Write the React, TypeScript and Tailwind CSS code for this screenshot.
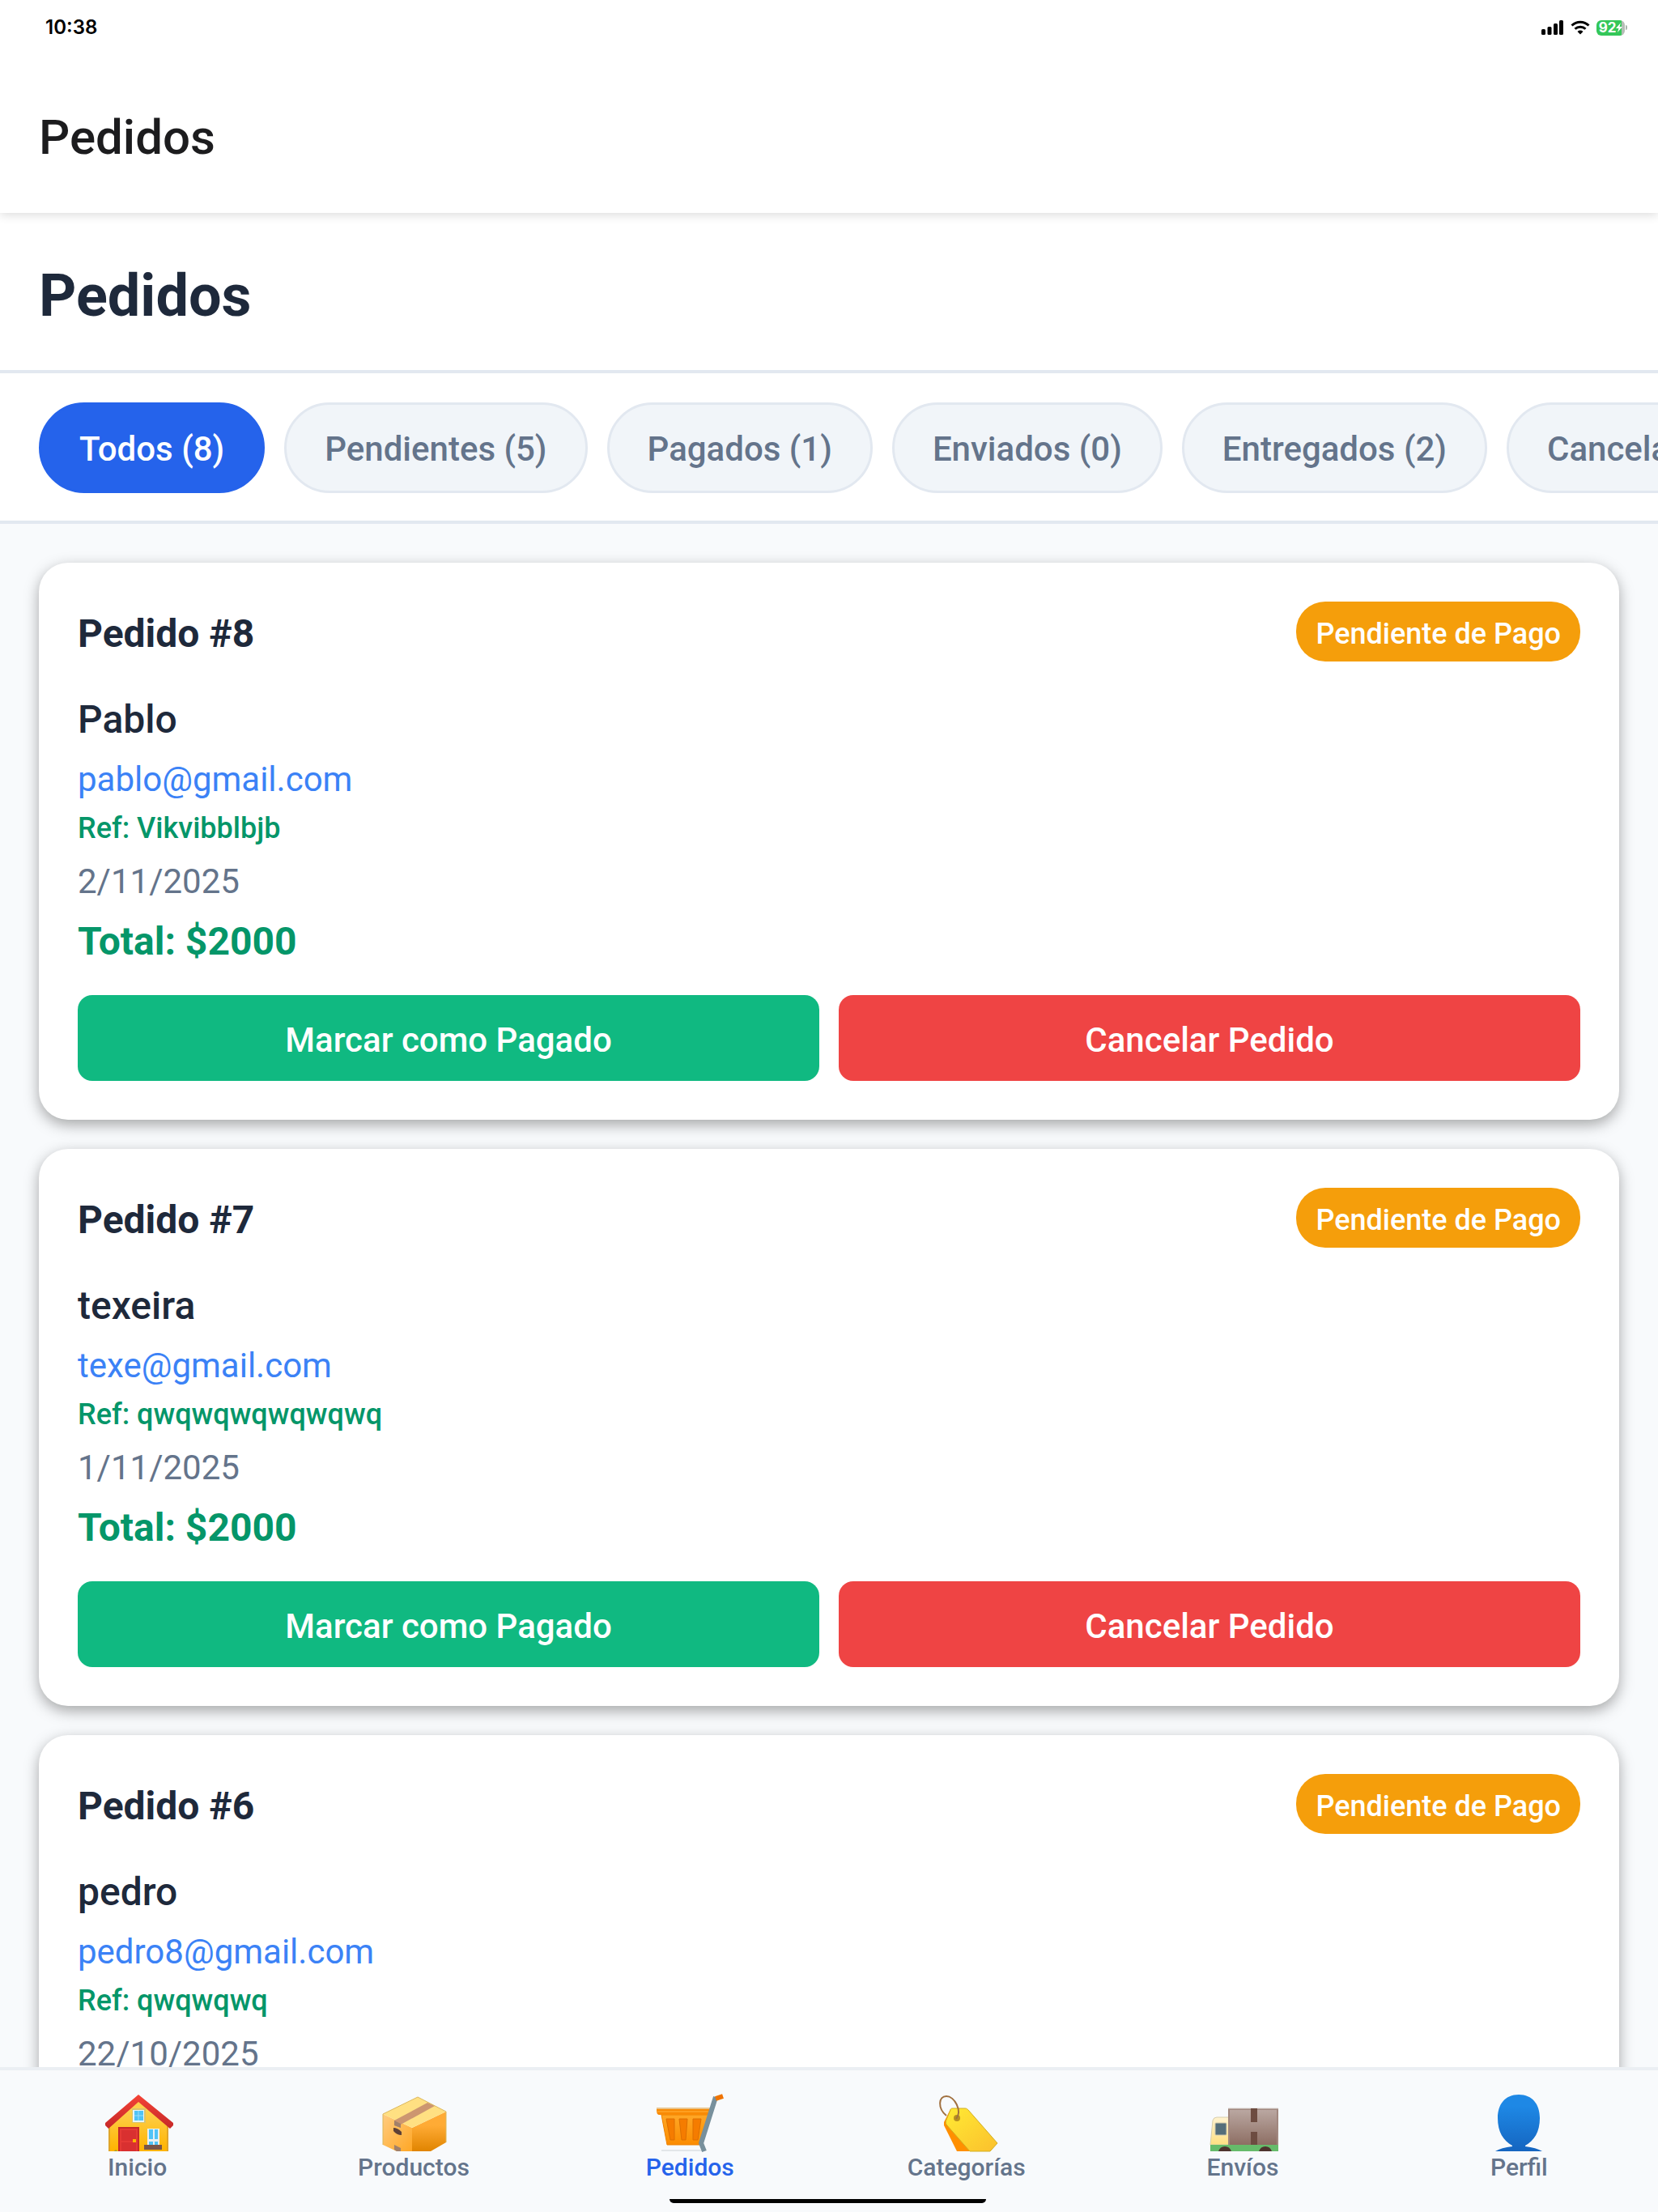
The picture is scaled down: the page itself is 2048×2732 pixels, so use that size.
import { useState } from 'react';
import type { ReactNode } from 'react';

interface Order {
  id: number;
  name: string;
  email: string;
  reference: string;
  date: string;
  total: number;
  status: string;
}

const orders: Order[] = [
  { id: 8, name: 'Pablo', email: 'pablo@gmail.com', reference: 'Vikvibblbjb', date: '2/11/2025', total: 2000, status: 'Pendiente de Pago' },
  { id: 7, name: 'texeira', email: 'texe@gmail.com', reference: 'qwqwqwqwqwqwq', date: '1/11/2025', total: 2000, status: 'Pendiente de Pago' },
  { id: 6, name: 'pedro', email: 'pedro8@gmail.com', reference: 'qwqwqwq', date: '22/10/2025', total: 2000, status: 'Pendiente de Pago' },
];

const filters = [
  { label: 'Todos', count: 8 },
  { label: 'Pendientes', count: 5 },
  { label: 'Pagados', count: 1 },
  { label: 'Enviados', count: 0 },
  { label: 'Entregados', count: 2 },
  { label: 'Cancelados', count: 0 },
];

function TabIcon({ children }: { children: ReactNode }) {
  return (
    <svg viewBox="0 0 84 70" className="h-[70px] w-[84px] overflow-visible" aria-hidden="true">
      {children}
    </svg>
  );
}

function HouseIcon() {
  return (
    <TabIcon>
      <defs>
        <linearGradient id="house-wall" x1="0" y1="0" x2="0" y2="1">
          <stop offset="0.2" stopColor="#fdd04c" />
          <stop offset="1" stopColor="#ffb300" />
        </linearGradient>
        <linearGradient id="house-roof" x1="0" y1="0" x2="0" y2="1">
          <stop offset="0" stopColor="#f44336" />
          <stop offset="1" stopColor="#c62828" />
        </linearGradient>
      </defs>
      <path d="M7 38 43 7l37 31v32H7z" fill="url(#house-wall)" />
      <path d="M7 38v32M79 38v32" stroke="#e0a52a" strokeWidth="2" />
      <path d="M43 0 86 35v3l-4 4L43 9 6 42l-4-4v-3z" fill="url(#house-roof)" />
      <path d="M18 40h26v30H18z" fill="#c62828" />
      <path d="M20 42h22v28H20z" fill="#e53935" />
      <path d="M22 44h18v13H22zM22 59h18v11H22z" fill="#d93030" />
      <rect x="36" y="55" width="4" height="4" fill="#ffb300" />
      <path d="M35 17h17v18H35z" fill="#d9c36b" />
      <path d="M36 19h14v15H36z" fill="#e8f4f8" />
      <path d="M38 20h11v12H38z" fill="#4fc3f7" />
      <path d="M43 20v12M38 26h11" stroke="#9adcf8" strokeWidth="1" />
      <path d="M54 42h15v21H54z" fill="#e8f0f2" />
      <path d="M56 43h5v12h-5zM63 43h4v12h-4zM56 58h5v4h-5zM63 58h4v4h-4z" fill="#4fc3f7" />
      <path d="M50 62h22v6H50z" fill="#795548" />
      <path d="M13 70c1-2 3-2 4 0z" fill="#9e9d24" />
    </TabIcon>
  );
}

function BoxIcon() {
  return (
    <TabIcon>
      <defs>
        <linearGradient id="box-left" x1="0" y1="0" x2="1" y2="1">
          <stop offset="0" stopColor="#ffcc80" />
          <stop offset="1" stopColor="#ffa726" />
        </linearGradient>
        <linearGradient id="box-right" x1="0" y1="0" x2="0" y2="1">
          <stop offset="0.35" stopColor="#ffab35" />
          <stop offset="1" stopColor="#e08400" />
        </linearGradient>
      </defs>
      <path d="M4 24 40 41v29H21L4 62z" fill="url(#box-left)" />
      <path d="M40 41 82 21v38L63 70H40z" fill="url(#box-right)" />
      <path d="M47 3 82 21 40 41 4 24z" fill="#ffe082" />
      <path d="M4 62V24L47 3l35 18v38" fill="none" stroke="#dcb75c" strokeWidth="1" />
      <path d="M59 10l9 4L26 37v4l-8-3v-6z" fill="#cc9670" />
      <path d="M18 32l8 4v5l-8-3z" fill="#a1806a" />
      <path d="M17 41q5 0 10 5v4q-6 0-10-5z" fill="#5d4037" />
      <path d="M18 62l8 4v4h-5l-3-2z" fill="#a1806a" />
    </TabIcon>
  );
}

function CartIcon() {
  return (
    <TabIcon>
      <defs>
        <linearGradient id="cart-bowl" x1="0" y1="0" x2="0" y2="1">
          <stop offset="0" stopColor="#ffa726" />
          <stop offset="1" stopColor="#fb8c00" />
        </linearGradient>
      </defs>
      <path d="M7 25h58L54 62H14z" fill="url(#cart-bowl)" stroke="#ee8100" strokeWidth="1" />
      <path d="M1 17h67l-2 8H5c-3 0-4-1-4-8z" fill="#f98a05" />
      <path d="M1 17h67" stroke="#e9c48c" strokeWidth="2" />
      <path d="M2 21h63" stroke="#ff9f1f" strokeWidth="2" />
      <path d="M13 30h10v26h-5zM29 30h10l-2 26h-5zM46 30h10l-4 26h-6z" fill="#f57c00" stroke="#dd6f00" strokeWidth="1" />
      <path d="M7 69h50" stroke="#e2e6e9" strokeWidth="2" />
      <path d="M74 3 56 60l4 10" fill="none" stroke="#78909c" strokeWidth="6" strokeLinejoin="round" />
      <path d="m74 5 9-3" stroke="#ef7300" strokeWidth="6" />
    </TabIcon>
  );
}

function TagIcon() {
  return (
    <TabIcon>
      <defs>
        <linearGradient id="tag-face" x1="0" y1="0" x2="1" y2="1">
          <stop offset="0.1" stopColor="#ffe633" />
          <stop offset="1" stopColor="#fbc02d" />
        </linearGradient>
      </defs>
      <path d="M22 18 14 34v4l16 32h20z" fill="#ff8f00" />
      <path d="M24 17h16c2 0 3 1 4 2l36 41-9 10H46L17 37c-1-2-1-4 0-6l5-12c0-1 1-2 2-2z" fill="url(#tag-face)" stroke="#d2ae20" strokeWidth="1" />
      <circle cx="30" cy="29" r="4" fill="#b8901e" />
      <path d="M29 30c8-10-2-28-12-28C7 2 6 17 17 26" fill="none" stroke="#a0703f" strokeWidth="2" />
    </TabIcon>
  );
}

function TruckIcon() {
  return (
    <TabIcon>
      <defs>
        <linearGradient id="truck-load" x1="0" y1="0" x2="0" y2="1">
          <stop offset="0" stopColor="#bcaaa4" />
          <stop offset="1" stopColor="#8d6e63" />
        </linearGradient>
        <linearGradient id="truck-cab" x1="0" y1="0" x2="0" y2="1">
          <stop offset="0" stopColor="#fff3d0" />
          <stop offset="1" stopColor="#ffe082" />
        </linearGradient>
      </defs>
      <path d="M2 62 5 32q1-4 5-4h15v34z" fill="url(#truck-cab)" stroke="#d8ceab" strokeWidth="1" />
      <rect x="8" y="35" width="14" height="15" rx="1" fill="#546e7a" stroke="#cfc9ac" strokeWidth="1" />
      <path d="M24 17h62v45H24z" fill="url(#truck-load)" />
      <path d="M25 62V18h60v44" fill="none" stroke="#a1887f" strokeWidth="2" />
      <path d="M24 17h62" stroke="#d9d1cd" strokeWidth="1" />
      <path d="M52 17h8v17h-8zM52 46h8v16h-8z" fill="#6d4c41" />
      <path d="M2 62h84v8H2z" fill="#66bb6a" />
      <path d="M12 70q2-6 8-6t8 6zM62 70q2-6 8-6t8 6z" fill="#4e342e" />
    </TabIcon>
  );
}

function PersonIcon() {
  return (
    <TabIcon>
      <defs>
        <linearGradient id="person-fill" x1="0" y1="0" x2="0" y2="70" gradientUnits="userSpaceOnUse">
          <stop offset="0.2" stopColor="#1e88e5" />
          <stop offset="1" stopColor="#1565c0" />
        </linearGradient>
      </defs>
      <path
        d="M42 0c17 0 26 12 26 29 0 17-7 28-18 34v1c9 1 16 3 21 6H13c5-3 12-5 21-6v-1C23 57 16 46 16 29 16 12 25 0 42 0z"
        fill="url(#person-fill)"
      />
    </TabIcon>
  );
}

const tabs = [
  { label: 'Inicio', href: '#inicio', icon: <HouseIcon /> },
  { label: 'Productos', href: '#productos', icon: <BoxIcon /> },
  { label: 'Pedidos', href: '#pedidos', icon: <CartIcon /> },
  { label: 'Categorías', href: '#categorias', icon: <TagIcon /> },
  { label: 'Envíos', href: '#envios', icon: <TruckIcon /> },
  { label: 'Perfil', href: '#perfil', icon: <PersonIcon /> },
];

function StatusBar() {
  return (
    <div className="flex h-[68px] items-center justify-between px-[38px] text-black">
      <span className="pl-[18px] font-[Inter,sans-serif] text-2xl font-semibold">10:38</span>
      <div className="flex items-center gap-2">
        <svg viewBox="0 0 28 18" className="h-[18px] w-7" aria-hidden="true">
          <rect x="0" y="11" width="5" height="7" rx="1.500" />
          <rect x="7.500" y="8" width="5" height="10" rx="1.500" />
          <rect x="15" y="4" width="5" height="14" rx="1.500" />
          <rect x="22" y="0" width="5" height="18" rx="1.500" />
        </svg>
        <svg viewBox="0 0 24 18" className="h-[18px] w-6" fill="none" stroke="currentColor" strokeWidth="3" aria-hidden="true">
          <path d="M1.500 6.500a15 15 0 0 1 21 0" />
          <path d="M5.500 10.800a9.300 9.300 0 0 1 13 0" />
          <path d="M12 17.500 8.500 14a5 5 0 0 1 7 0z" fill="currentColor" stroke="none" />
        </svg>
        <div className="flex items-center gap-px">
          <div className="flex h-[19px] w-[35px] items-center justify-center rounded-md bg-linear-to-r from-[#34c759] from-90% to-[#b5bdb6] to-90% text-white">
            <span className="font-[Inter,sans-serif] text-[17px] leading-none font-bold">92</span>
            <svg viewBox="0 0 8 12" className="h-3 w-2" fill="currentColor" aria-hidden="true">
              <path d="M6 0 0 7h3.500L2 12l6-7H4.500z" />
            </svg>
          </div>
          <span className="h-1.5 w-0.5 rounded-r-full bg-[#a9b5ac]" />
        </div>
      </div>
    </div>
  );
}

function OrderCard({ order }: { order: Order }) {
  return (
    <article className="rounded-[36px] bg-white p-12 text-[#1e293b] shadow-[0_6px_18px_rgba(0,0,0,0.34)]">
      <div className="flex items-start justify-between">
        <h2 className="text-5xl leading-[80px] font-bold">Pedido #{order.id}</h2>
        <span className="rounded-[36px] bg-[#f59e0b] px-6 pt-4 pb-2.5 text-4xl leading-[48px] font-medium text-white">
          {order.status}
        </span>
      </div>
      <p className="mt-[34px] text-5xl leading-[64px] font-medium">{order.name}</p>
      <a href={`mailto:${order.email}`} className="mt-3.5 block text-[42px] leading-[56px] text-[#3b82f6]">
        {order.email}
      </a>
      <p className="mt-2 text-4xl leading-[48px] font-medium text-[#059669]">Ref: {order.reference}</p>
      <p className="mt-3.5 text-[42px] leading-[56px] text-[#64748b]">{order.date}</p>
      <p className="mt-3.5 text-5xl leading-[64px] font-bold text-[#059669]">Total: ${order.total}</p>
      <div className="mt-[34px] grid grid-cols-2 gap-6 text-[42px] leading-[56px] font-medium text-white">
        <button type="button" className="rounded-[18px] bg-[#10b981] pt-7 pb-[22px]">
          Marcar como Pagado
        </button>
        <button type="button" className="rounded-[18px] bg-[#ef4444] pt-7 pb-[22px]">
          Cancelar Pedido
        </button>
      </div>
    </article>
  );
}

export default function App() {
  const [activeFilter, setActiveFilter] = useState('Todos');

  return (
    <div className="flex h-screen flex-col overflow-hidden bg-[#f8fafc] font-[Roboto,sans-serif]">
      <header className="relative z-10 shrink-0 bg-white pb-[53px] shadow-[0_2px_12px_rgba(0,0,0,0.15)]">
        <StatusBar />
        <div className="px-12 pt-[62px] text-[60px] leading-[80px] font-medium text-[#1c1c1e]">Pedidos</div>
      </header>

      <div className="shrink-0 border-b-4 border-[#e2e8f0] bg-white px-12 pt-[50px] pb-[38px]">
        <h1 className="text-7xl leading-[106px] font-bold text-[#1e293b]">Pedidos</h1>
      </div>

      <div className="flex shrink-0 gap-6 overflow-x-auto border-b-4 border-[#e2e8f0] bg-white px-12 pt-9 pb-[34px] [scrollbar-width:none]">
        {filters.map((filter) => (
          <button
            key={filter.label}
            type="button"
            onClick={() => setActiveFilter(filter.label)}
            className={`shrink-0 rounded-[60px] border-[3px] px-[47px] pt-[27px] pb-[23px] text-[42px] leading-[56px] font-medium whitespace-nowrap ${
              activeFilter === filter.label
                ? 'border-[#2563eb] bg-[#2563eb] text-white'
                : 'border-[#e2e8f0] bg-[#f1f5f9] text-[#64748b]'
            }`}
          >
            {filter.label} ({filter.count})
          </button>
        ))}
      </div>

      <main className="flex min-h-0 flex-1 flex-col gap-9 overflow-y-auto p-12 [scrollbar-width:none]">
        {orders.map((order) => (
          <OrderCard key={order.id} order={order} />
        ))}
      </main>

      <nav className="relative z-10 grid shrink-0 grid-cols-6 border-t-4 border-[#ebeff3] bg-[#f8fafc] pt-[30px] pb-[37px]">
        {tabs.map((tab) => (
          <a
            key={tab.label}
            href={tab.href}
            className={`flex flex-col items-center gap-0.5 pr-0.5 text-[30px] leading-9 font-medium ${
              tab.label === 'Pedidos' ? 'text-[#2563eb]' : 'text-[#64748b]'
            }`}
          >
            {tab.icon}
            <span>{tab.label}</span>
          </a>
        ))}
        <div className="absolute inset-x-0 bottom-[11px] flex justify-center pr-1">
          <div className="h-[5px] w-[391px] rounded-b-full bg-black" />
        </div>
      </nav>
    </div>
  );
}
